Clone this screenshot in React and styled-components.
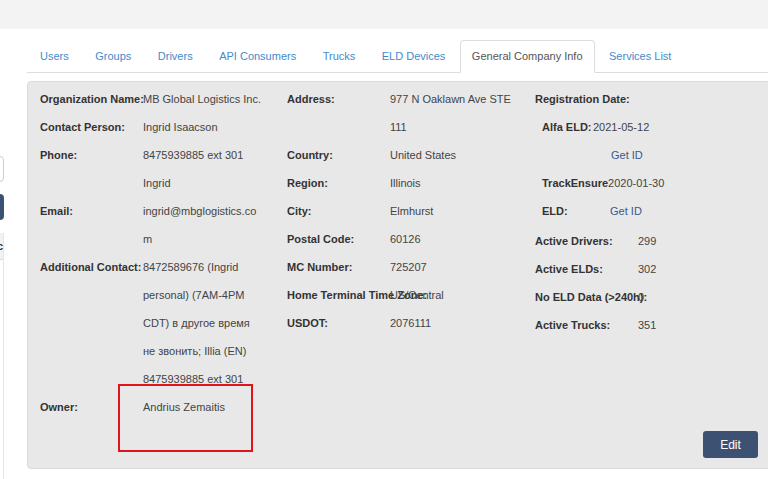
import React from 'react';
import styled, { createGlobalStyle } from 'styled-components';

const Global = createGlobalStyle`
  html, body { margin: 0; padding: 0; background: #fff; overflow: hidden; }
  body { font-family: "Liberation Sans", Arial, sans-serif; font-size: 11px; color: #333; }
`;

const Page = styled.div`
  width: 768px;
  height: 479px;
  overflow: hidden;
  display: flex;
  flex-direction: column;
`;

const TopBar = styled.div`
  height: 29px;
  flex: none;
  background: #f3f3f3;
`;

const Body = styled.div`
  display: flex;
  flex: 1;
  min-height: 0;
`;

const Sidebar = styled.div`
  width: 4px;
  flex: none;
  overflow: hidden;
  display: flex;
  flex-direction: column;
  align-items: flex-end;
  padding-top: 127px;
`;

const SideInput = styled.div`
  flex: none;
  width: 180px;
  height: 26px;
  box-sizing: border-box;
  border: 1px solid #ccc;
  border-radius: 4px;
  background: #fff;
`;

const SideButton = styled.div`
  flex: none;
  width: 80px;
  height: 26px;
  margin-top: 12px;
  border-radius: 4px;
  background: #3d5273;
`;

const SideTable = styled.div`
  flex: 1;
  width: 220px;
  margin-top: 13px;
  box-sizing: border-box;
  border-right: 1px solid #e6e6e6;
  background: #fff;
`;

const SideHead = styled.div`
  height: 27px;
  box-sizing: border-box;
  line-height: 27px;
  background: #f2f2f2;
  border-bottom: 1px solid #ddd;
  text-align: right;
  font-weight: bold;
  color: #333;
`;

const Main = styled.div`
  flex: none;
  width: 744px;
  margin-left: 23px;
`;

const Tabs = styled.ul`
  list-style: none;
  margin: 11px 0 0;
  padding: 0 0 0 1px;
  display: flex;
  border-bottom: 1px solid #ddd;
`;

const Tab = styled.li`
  margin: 0 2.5px -1px 0;
  padding: 0 11px;
  line-height: 31px;
  border: 1px solid ${p => (p.$active ? '#ddd' : 'transparent')};
  border-bottom-color: transparent;
  border-radius: 4px 4px 0 0;
  background: ${p => (p.$active ? '#fff' : 'transparent')};
  color: ${p => (p.$active ? '#555' : '#428bca')};
  font-size: 11px;
  white-space: nowrap;
  cursor: pointer;
`;

const Panel = styled.div`
  margin-top: 8px;
  border: 1px solid #dadada;
  border-radius: 4px;
  background: #e8e8e8;
  padding: 3px 12px 10px;
`;

const Columns = styled.div`
  display: grid;
  grid-template-columns: 247px 248px 1fr;
`;

const Fields = styled.div`
  display: grid;
  grid-template-columns: 103px 122px;
  align-content: start;
  line-height: 28px;
  margin-top: ${p => p.$gap || 0}px;
`;

const Label = styled.div`
  font-weight: bold;
  white-space: nowrap;
  color: #333;
  grid-column: ${p => (p.$wide ? '1 / -1' : 'auto')};
`;

const Value = styled.div`
  position: relative;
  color: #444;
  overflow-wrap: break-word;
`;

const Highlight = styled.div`
  position: absolute;
  left: -25px;
  top: -9px;
  width: 135px;
  height: 68px;
  box-sizing: border-box;
  border: 2px solid #e0141b;
  pointer-events: none;
`;

const Column = styled.div`
  display: flex;
  flex-direction: column;
`;

const SubRow = styled.div`
  display: flex;
  padding-left: 7px;
  line-height: 28px;
`;

const SubLabel = styled.div`
  flex: none;
  min-width: 51px;
  width: min-content;
  font-weight: bold;
  color: #333;
`;

const SubValue = styled.div`
  display: flex;
  flex-direction: column;
  color: #444;
`;

const GetId = styled.a`
  padding-left: ${p => p.$offset}px;
  color: #36598f;
  text-decoration: none;
  cursor: pointer;
`;

const Footer = styled.div`
  display: flex;
  justify-content: flex-end;
  margin-top: 10px;
`;

const EditButton = styled.button`
  width: 55px;
  height: 27px;
  padding: 0;
  border: none;
  border-radius: 3px;
  background: #3d5273;
  color: #fff;
  font-family: "Liberation Sans", Arial, sans-serif;
  font-size: 12px;
  cursor: pointer;
`;

const tabs = ['Users', 'Groups', 'Drivers', 'API Consumers', 'Trucks', 'ELD Devices', 'General Company Info', 'Services List'];

const col1 = [
  ['Organization Name:', 'MB Global Logistics Inc.'],
  ['Contact Person:', 'Ingrid Isaacson'],
  ['Phone:', '8475939885 ext 301 Ingrid'],
  ['Email:', 'ingrid@mbglogistics.com'],
  ['Additional Contact:', '8472589676 (Ingrid personal) (7AM-4PM CDT) в другое время не звонить; Illia (EN) 8475939885 ext 301'],
];

const col2 = [
  ['Address:', '977 N Oaklawn Ave STE 111'],
  ['Country:', 'United States'],
  ['Region:', 'Illinois'],
  ['City:', 'Elmhurst'],
  ['Postal Code:', '60126'],
  ['MC Number:', '725207'],
  ['Home Terminal Time Zone:', 'US/Central'],
  ['USDOT:', '2076111'],
];

const stats = [
  ['Active Drivers:', '299'],
  ['Active ELDs:', '302'],
  ['No ELD Data (>240h):', '0'],
  ['Active Trucks:', '351'],
];

const registrations = [
  { name: 'Alfa ELD:', date: '2021-05-12', offset: 18 },
  { name: 'TrackEnsure ELD:', date: '2020-01-30', offset: 2 },
];

export default function App() {
  return (
    <Page>
      <Global />
      <TopBar />
      <Body>
        <Sidebar>
          <SideInput />
          <SideButton />
          <SideTable>
            <SideHead>Desc</SideHead>
          </SideTable>
        </Sidebar>
        <Main>
          <Tabs>
            {tabs.map(t => (
              <Tab key={t} $active={t === 'General Company Info'}>{t}</Tab>
            ))}
          </Tabs>
          <Panel>
            <Columns>
              <Fields>
                {col1.map(([l, v]) => (
                  <React.Fragment key={l}>
                    <Label>{l}</Label>
                    <Value>{v}</Value>
                  </React.Fragment>
                ))}
                <Label>Owner:</Label>
                <Value>
                  Andrius Zemaitis
                  <Highlight />
                </Value>
              </Fields>
              <Fields>
                {col2.map(([l, v]) => (
                  <React.Fragment key={l}>
                    <Label>{l}</Label>
                    <Value>{v}</Value>
                  </React.Fragment>
                ))}
              </Fields>
              <Column>
                <Fields>
                  <Label $wide>Registration Date:</Label>
                </Fields>
                {registrations.map(r => (
                  <SubRow key={r.name}>
                    <SubLabel>{r.name}</SubLabel>
                    <SubValue>
                      <span>{r.date}</span>
                      <GetId $offset={r.offset}>Get ID</GetId>
                    </SubValue>
                  </SubRow>
                ))}
                <Fields $gap={2}>
                  {stats.map(([l, v]) => (
                    <React.Fragment key={l}>
                      <Label>{l}</Label>
                      <Value>{v}</Value>
                    </React.Fragment>
                  ))}
                </Fields>
              </Column>
            </Columns>
            <Footer>
              <EditButton>Edit</EditButton>
            </Footer>
          </Panel>
        </Main>
      </Body>
    </Page>
  );
}
